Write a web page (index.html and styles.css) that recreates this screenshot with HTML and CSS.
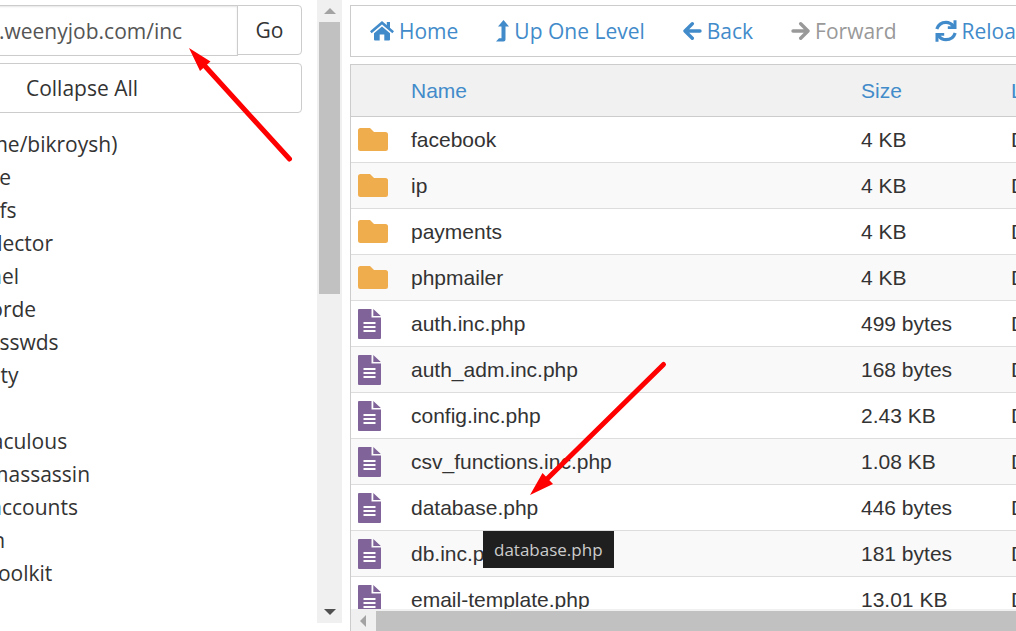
FILE: index.html
```html
<!DOCTYPE html>
<html lang="en">
<head>
<meta charset="utf-8">
<title>File Manager</title>
<link rel="stylesheet" href="styles.css">
</head>
<body>
<svg class="sprite" aria-hidden="true">
  <symbol id="folder" viewBox="0 0 30 23"><path fill="#f0ad4e" d="M2.500 0h9.500l4 4h11.500Q30 4 30 6.500v14Q30 23 27.500 23h-25Q0 23 0 20.500v-18Q0 0 2.500 0z"/></symbol>
  <symbol id="file" viewBox="0 0 23 30"><path fill="#7f6399" d="M1 0h12.500v8.500H23V29q0 1-1 1H1q-1 0-1-1V1q0-1 1-1z"/><path fill="#7f6399" d="M15.300 0L22.800 7h-7.500z"/><path stroke="#fff" stroke-width="2" d="M5.500 14h12M5.500 18h12M5.500 22h12"/></symbol>
</svg>
<div class="app">
  <aside class="side">
    <div class="side-body">
      <form class="path">
        <input class="path-input" type="text" aria-label="Path" value=".weenyjob.com/inc">
        <button class="btn go" type="button">Go</button>
      </form>
      <button class="btn collapse" type="button">Collapse All</button>
      <ul class="tree">
        <li>(/home/bikroysh)</li>
        <li>.cache</li>
        <li>.cagefs</li>
        <li>.cl.selector</li>
        <li>.cpanel</li>
        <li>.cphorde</li>
        <li>.htpasswds</li>
        <li>.koality</li>
        <li>.pki</li>
        <li>.softaculous</li>
        <li>.spamassassin</li>
        <li>.subaccounts</li>
        <li>.trash</li>
        <li>.wp-toolkit</li>
      </ul>
    </div>
    <div class="vbar">
      <svg width="12" height="6" viewBox="0 0 12 6"><path fill="#a3a3a3" d="M0 6L6 0l6 6z"/></svg>
      <div class="vthumb"></div>
      <svg width="12" height="6" viewBox="0 0 12 6"><path fill="#505050" d="M0 0h12L6 6z"/></svg>
    </div>
  </aside>
  <main class="main">
    <nav class="toolbar">
      <button class="tool" type="button"><svg width="24" height="20" viewBox="0 0 24 20"><path fill="none" stroke="currentColor" stroke-width="2.600" d="M.8 11.300L12 1.800l11.200 9.500"/><path fill="currentColor" d="M16.800 1h3.200v6.500l-3.200-2.800zM12 5.600l8 6.700V18.500q0 1-1 1h-4.700v-6H9.700v6H5q-1 0-1-1v-6.200z"/></svg>Home</button>
      <button class="tool" type="button"><svg width="13" height="22" viewBox="0 0 13 22"><path fill="currentColor" d="M7.500 0l5.500 6.500H9.500V19.500q0 2-2 2H0l3-3.300h2.500V6.500H2z"/></svg>Up One Level</button>
      <button class="tool" type="button"><svg width="19" height="18" viewBox="0 0 19 18"><path fill="none" stroke="currentColor" stroke-width="3.400" stroke-linecap="round" stroke-linejoin="round" d="M9.300 1.800L2 9l7.300 7.200M2.500 9H17"/></svg>Back</button>
      <button class="tool" type="button" disabled><svg width="19" height="18" viewBox="0 0 19 18"><path fill="none" stroke="currentColor" stroke-width="3.400" stroke-linecap="round" stroke-linejoin="round" d="M9.700 1.800L17 9l-7.300 7.200M16.500 9H2"/></svg>Forward</button>
      <button class="tool" type="button"><svg width="22" height="22" viewBox="0 0 22 22"><path fill="none" stroke="currentColor" stroke-width="3.200" d="M1.800 9Q4 2.300 11 2.300q4.500 0 7.500 4M20.200 13Q18 19.700 11 19.700q-4.500 0-7.500-4"/><path fill="currentColor" d="M18.500 .3h3V9h-8.700V6.200h3.500l2.200-2zM3.500 21.700h-3V13h8.700v2.800H5.700l-2.200 2z"/></svg>Reload</button>
    </nav>
    <div class="list">
      <table class="files">
        <colgroup><col class="c-icon"><col class="c-name"><col class="c-size"><col class="c-date"></colgroup>
        <thead><tr><th></th><th><a href="#">Name</a></th><th><a href="#">Size</a></th><th><a href="#">Last Modified</a></th></tr></thead>
        <tbody>
          <tr><td><svg class="ico" width="30" height="23"><use href="#folder"/></svg></td><td>facebook</td><td>4 KB</td><td>Dec 12, 2020</td></tr>
          <tr><td><svg class="ico" width="30" height="23"><use href="#folder"/></svg></td><td>ip</td><td>4 KB</td><td>Dec 12, 2020</td></tr>
          <tr><td><svg class="ico" width="30" height="23"><use href="#folder"/></svg></td><td>payments</td><td>4 KB</td><td>Dec 12, 2020</td></tr>
          <tr><td><svg class="ico" width="30" height="23"><use href="#folder"/></svg></td><td>phpmailer</td><td>4 KB</td><td>Dec 12, 2020</td></tr>
          <tr><td><svg class="ico" width="23" height="30"><use href="#file"/></svg></td><td>auth.inc.php</td><td>499 bytes</td><td>Dec 12, 2020</td></tr>
          <tr><td><svg class="ico" width="23" height="30"><use href="#file"/></svg></td><td>auth_adm.inc.php</td><td>168 bytes</td><td>Dec 12, 2020</td></tr>
          <tr><td><svg class="ico" width="23" height="30"><use href="#file"/></svg></td><td>config.inc.php</td><td>2.43 KB</td><td>Dec 12, 2020</td></tr>
          <tr><td><svg class="ico" width="23" height="30"><use href="#file"/></svg></td><td>csv_functions.inc.php</td><td>1.08 KB</td><td>Dec 12, 2020</td></tr>
          <tr><td><svg class="ico" width="23" height="30"><use href="#file"/></svg></td><td><span class="tip-host">database.php<span class="tip" role="tooltip">database.php</span></span></td><td>446 bytes</td><td>Dec 12, 2020</td></tr>
          <tr><td><svg class="ico" width="23" height="30"><use href="#file"/></svg></td><td>db.inc.php</td><td>181 bytes</td><td>Dec 12, 2020</td></tr>
          <tr><td><svg class="ico" width="23" height="30"><use href="#file"/></svg></td><td>email-template.php</td><td>13.01 KB</td><td>Dec 12, 2020</td></tr>
        </tbody>
      </table>
    </div>
    <div class="hbar">
      <svg width="6" height="12" viewBox="0 0 6 12"><path fill="#a3a3a3" d="M6 0v12L0 6z"/></svg>
      <div class="hthumb"></div>
    </div>
  </main>
</div>
<svg class="arrows" width="700" height="520" viewBox="0 0 700 520" aria-hidden="true">
  <g stroke="#f00" stroke-width="5" stroke-linecap="round"><path d="M289.500 159L204 65"/><path d="M663.500 364.500L547 479"/></g>
  <path fill="#f00" d="M189 48l21.500 13.500L200 71zM530 495l12.500-22L553 484z"/>
</svg>
</body>
</html>
```
FILE: styles.css
```css
* { box-sizing: border-box; }
body {
  margin: 0;
  overflow: hidden;
  background: #fff;
  color: #333;
  font-family: "Open Sans", sans-serif;
  font-size: 21px;
}
button, input { font: inherit; color: inherit; }
svg { flex: none; }
.sprite { position: absolute; width: 0; height: 0; }
.app { display: flex; height: 100vh; overflow: hidden; }

.side { display: flex; flex: none; width: 342px; padding-bottom: 8px; }
.side-body { flex: 1; min-width: 0; padding: 5px 15px 0 0; overflow: hidden; }
.path { display: flex; align-items: flex-start; margin-left: -16px; }
.path-input {
  flex: 1;
  min-width: 0;
  height: 51px;
  padding: 0 14px;
  border: 1px solid #ccc;
  background: #fff;
  color: #555;
  box-shadow: inset 0 1px 2px rgba(0, 0, 0, .1);
}
.btn { height: 50px; padding: 0; border: 1px solid #ccc; border-radius: 4px; background: #fff; }
.go { width: 65px; margin-left: -1px; border-radius: 0 4px 4px 0; }
.collapse { display: block; width: calc(100% + 138px); margin: 7px 0 0 -138px; }
.tree { margin: 15px 0 0 -51px; padding: 0; list-style: none; line-height: 33px; white-space: nowrap; }
.tree li { height: 33px; }

.vbar {
  display: flex;
  flex-direction: column;
  align-items: center;
  width: 25px;
  padding: 8px 2px;
  background: #f0f0f0;
}
.vthumb { width: 21px; height: 272px; margin: 8px 0 auto; background: #c1c1c1; }

.main { display: flex; flex: 1; flex-direction: column; min-width: 0; margin-left: 8px; overflow: hidden; }
.toolbar {
  display: flex;
  flex: none;
  align-items: center;
  gap: 38px;
  height: 52px;
  margin: 5px 0 7px;
  padding-left: 19px;
  border: 1px solid #ccc;
  border-right: 0;
  overflow: hidden;
}
.tool {
  display: flex;
  flex: none;
  align-items: center;
  gap: 5px;
  padding: 0;
  border: 0;
  background: none;
  color: #428bca;
  white-space: nowrap;
}
.tool:disabled { color: #999; }

.list {
  flex: 1;
  min-height: 0;
  border: 1px solid #ccc;
  border-width: 1px 0 0 1px;
  overflow: hidden;
  font-family: "Liberation Sans", Arial, sans-serif;
}
.files { width: 953px; table-layout: fixed; border-collapse: separate; border-spacing: 0; }
.c-icon { width: 53px; }
.c-name { width: 450px; }
.c-size { width: 150px; }
.files th, .files td { height: 46px; padding: 0 7px; border-bottom: 1px solid #ddd; text-align: left; white-space: nowrap; }
.files th { height: 52px; border-color: #ccc; background: #f1f1f1; font-weight: normal; }
.files tbody tr:nth-child(even) { background: #f9f9f9; }
.files a { color: #428bca; text-decoration: none; }
.ico { display: block; }
.tip-host { position: relative; }
.tip {
  position: absolute;
  top: 35px;
  left: 72px;
  padding: 0 11px;
  background: #1f1f1f;
  color: #ccc;
  font: 17px/37px "Open Sans", sans-serif;
}

.hbar {
  display: flex;
  flex: none;
  align-items: center;
  height: 22px;
  padding: 2px 0 0 9px;
  border-left: 1px solid #ccc;
  background: #f0f0f0;
}
.hthumb { flex: 1; align-self: stretch; margin-left: 10px; background: #c1c1c1; }
.arrows { position: absolute; top: 0; left: 0; pointer-events: none; }
```
